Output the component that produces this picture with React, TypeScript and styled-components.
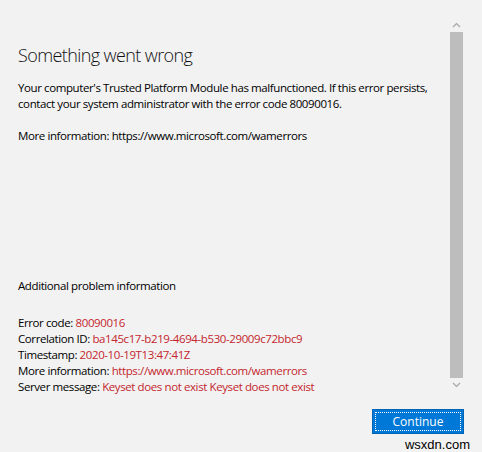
import React from 'react';
import styled, { createGlobalStyle } from 'styled-components';

const GlobalStyle = createGlobalStyle`
  html, body {
    margin: 0;
    padding: 0;
    background: #f2f2f2;
  }
  body {
    font-family: "Open Sans", "Noto Sans", sans-serif;
    color: #000;
  }
`;

const Window = styled.div`
  width: 482px;
  height: 452px;
  background: #f2f2f2;
  display: flex;
  flex-direction: column;
  overflow: hidden;
`;

const Body = styled.div`
  display: flex;
  height: 400px;
`;

const Content = styled.div`
  flex: 1;
  padding: 41px 0 0 18px;
  display: flex;
  flex-direction: column;
`;

const Heading = styled.h1`
  margin: 0;
  font-size: 18px;
  font-weight: 300;
  line-height: 28px;
  letter-spacing: -0.6px;
  color: #111;
`;

const Paragraph = styled.p<{ $top?: number }>`
  margin: ${p => p.$top ?? 0}px 0 0 0;
  font-size: 11.5px;
  line-height: 16px;
  letter-spacing: -0.4px;
`;

const Red = styled.span`
  color: #c4262e;
`;

const Scrollbar = styled.div`
  width: 17px;
  margin: 18px 17px 0 0;
  height: 374px;
  display: flex;
  flex-direction: column;
  align-items: center;
`;

const Arrow = styled.div`
  height: 14px;
  display: flex;
  align-items: center;
  justify-content: center;
`;

const Thumb = styled.div`
  width: 13px;
  flex: 1;
  background: #bdbdbd;
`;

const Footer = styled.div`
  display: flex;
  justify-content: flex-end;
  padding: 9px 18px 0 0;
`;

const Button = styled.button`
  width: 92px;
  height: 25px;
  background: #0078d7;
  border: 1px solid #0064b4;
  color: #fff;
  font-family: "Open Sans", "Noto Sans", sans-serif;
  font-size: 12px;
  position: relative;
  padding: 0;
  cursor: pointer;

  &::after {
    content: '';
    position: absolute;
    inset: 2px;
    border: 1px dotted #fff;
  }
`;

const Watermark = styled.div`
  align-self: flex-end;
  margin: 4px 12px 0 0;
  font-family: "Liberation Sans", Arial, sans-serif;
  font-size: 13px;
  line-height: 14px;
  color: #000;
`;

const Chevron = ({ up }: { up?: boolean }) => (
  <svg width="9" height="6" viewBox="0 0 9 6">
    <path
      d={up ? 'M1 5 L4.5 1.5 L8 5' : 'M1 1 L4.5 4.5 L8 1'}
      fill="none"
      stroke="#a6a6a6"
      strokeWidth="1.2"
    />
  </svg>
);

export default function App() {
  return (
    <>
      <GlobalStyle />
      <Window>
        <Body>
          <Content>
            <Heading>Something went wrong</Heading>
            <Paragraph $top={11}>
              Your computer's Trusted Platform Module has malfunctioned. If this error persists,
              <br />
              contact your system administrator with the error code 80090016.
            </Paragraph>
            <Paragraph $top={16}>More information: https://www.microsoft.com/wamerrors</Paragraph>
            <Paragraph $top={134}>Additional problem information</Paragraph>
            <Paragraph $top={21}>
              Error code: <Red>80090016</Red>
              <br />
              Correlation ID: <Red>ba145c17-b219-4694-b530-29009c72bbc9</Red>
              <br />
              Timestamp: <Red>2020-10-19T13:47:41Z</Red>
              <br />
              More information: <Red>https://www.microsoft.com/wamerrors</Red>
              <br />
              Server message: <Red>Keyset does not exist Keyset does not exist</Red>
            </Paragraph>
          </Content>
          <Scrollbar>
            <Arrow>
              <Chevron up />
            </Arrow>
            <Thumb />
            <Arrow>
              <Chevron />
            </Arrow>
          </Scrollbar>
        </Body>
        <Footer>
          <Button>Continue</Button>
        </Footer>
        <Watermark>wsxdn.com</Watermark>
      </Window>
    </>
  );
}
